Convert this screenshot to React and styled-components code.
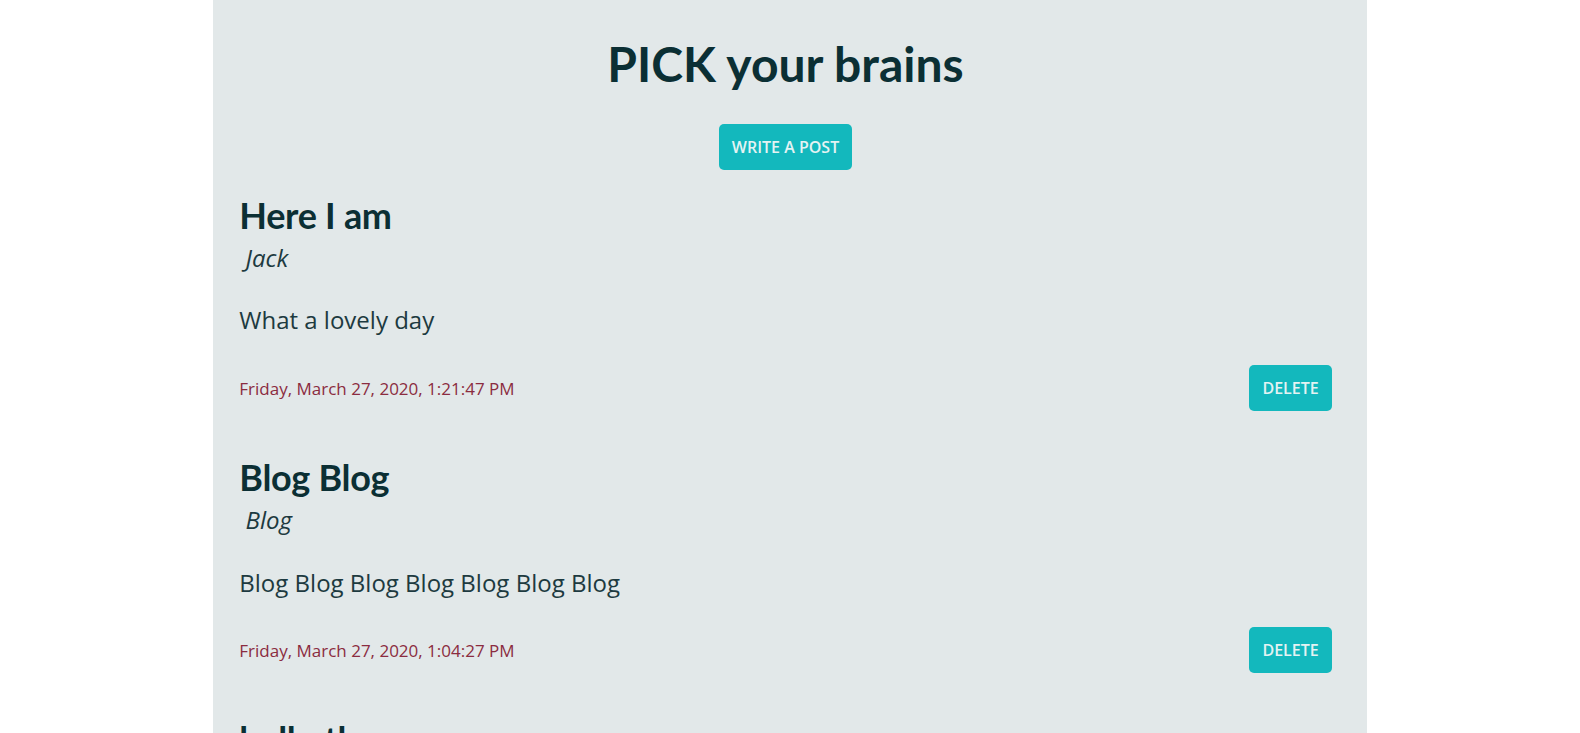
import React from 'react';
import styled, { createGlobalStyle } from 'styled-components';

const posts = [
  {
    id: 1,
    title: 'Here I am',
    author: 'Jack',
    body: 'What a lovely day',
    date: 'Friday, March 27, 2020, 1:21:47 PM',
  },
  {
    id: 2,
    title: 'Blog Blog',
    author: 'Blog',
    body: 'Blog Blog Blog Blog Blog Blog Blog',
    date: 'Friday, March 27, 2020, 1:04:27 PM',
  },
  {
    id: 3,
    title: 'hello there',
    author: 'Jill',
    body: 'Just saying hi',
    date: 'Friday, March 27, 2020, 12:58:10 PM',
  },
];

const App = () => {
  return (
    <>
      <GlobalStyle />
      <Page>
        <Header>
          <Title>PICK your brains</Title>
          <Button>Write a post</Button>
        </Header>
        <PostList>
          {posts.map(post => (
            <Post key={post.id}>
              <PostTitle>{post.title}</PostTitle>
              <Author>{'\u00a0' + post.author}</Author>
              <Body>{post.body}</Body>
              <Footer>
                <DateText>{post.date}</DateText>
                <Button>Delete</Button>
              </Footer>
            </Post>
          ))}
        </PostList>
      </Page>
    </>
  );
};

const GlobalStyle = createGlobalStyle`
  html, body {
    margin: 0;
    background: #ffffff;
    overflow: hidden;
  }
  * {
    box-sizing: border-box;
  }
`;

const Page = styled.main`
  width: 73%;
  min-height: 100vh;
  margin: 0 auto;
  padding: 35px 35px 40px 26px;
  background-color: #e2e8e9;
  font-family: 'Open Sans', sans-serif;
  color: #1d3a40;
`;

const Header = styled.header`
  display: flex;
  flex-direction: column;
  align-items: center;
  gap: 31px;
`;

const Title = styled.h1`
  margin: 0;
  font-family: Lato, sans-serif;
  font-size: 48px;
  font-weight: 700;
  line-height: 1.2;
  color: #0b2f34;
`;

const Button = styled.button`
  height: 46px;
  padding: 0 13px;
  border: none;
  border-radius: 5px;
  background-color: #13b8bd;
  color: #e4f3f3;
  font-family: 'Open Sans', sans-serif;
  font-size: 16px;
  font-weight: 600;
  text-transform: uppercase;
  cursor: pointer;
`;

const PostList = styled.section`
  display: flex;
  flex-direction: column;
  gap: 45px;
  margin-top: 24px;
`;

const Post = styled.article`
  display: flex;
  flex-direction: column;
`;

const PostTitle = styled.h2`
  margin: 0;
  font-family: Lato, sans-serif;
  font-size: 36px;
  font-weight: 700;
  line-height: 1.2;
  letter-spacing: -0.3px;
  color: #0b2f34;
`;

const Author = styled.em`
  display: block;
  margin-top: 5px;
  font-size: 24px;
  line-height: 1.36;
  color: #1d3a40;
`;

const Body = styled.p`
  margin: 30px 0 0;
  font-size: 24px;
  line-height: 1.36;
`;

const Footer = styled.div`
  display: flex;
  justify-content: space-between;
  align-items: center;
  margin-top: 28px;
`;

const DateText = styled.span`
  font-size: 17px;
  color: #8b2c40;
`;

export default App;
